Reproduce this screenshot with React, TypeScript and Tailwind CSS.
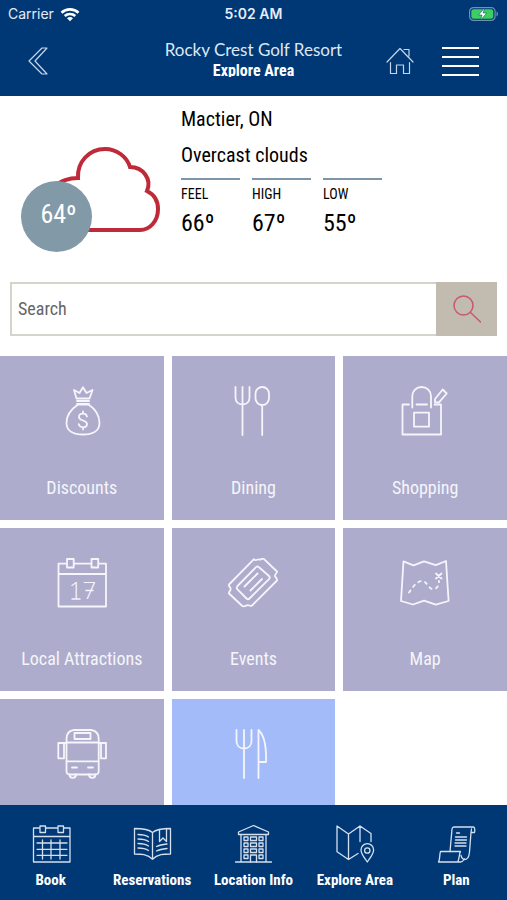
import type { ReactNode } from "react";

const narrow = "font-['Roboto_Condensed','Liberation_Sans_Narrow','Arial_Narrow',sans-serif]";

type IconProps = { children: ReactNode; className: string; box: string; stroke?: number };

function Icon({ children, className, box, stroke = 1.8 }: IconProps) {
  return (
    <svg
      aria-hidden="true"
      viewBox={box}
      className={className}
      fill="none"
      stroke="currentColor"
      strokeWidth={stroke}
      strokeLinejoin="round"
      strokeLinecap="round"
    >
      {children}
    </svg>
  );
}

type Tile = { name: string; label?: string; color: string; art: ReactNode };

const tiles: Tile[] = [
  {
    name: "Discounts",
    label: "Discounts",
    color: "bg-[#adaccc]",
    art: (
      <>
        <path d="M19.5 12.5 17 4l5.5 3L26 1.2 29.500 7l6-3-3 8.500zM20 15h12M20 18h12" />
        <path d="M21 18.500C15 22.500 9.500 29 9.500 37c0 8 7 11.500 16.500 11.500S42.500 45 42.500 37c0-8-5-14.500-11-18.500z" />
        <path d="M30 30.500c-.5-2-2-2.800-4-2.800-2.300 0-4 1.300-4 3.300 0 4.600 8 2.400 8 7 0 2-1.700 3.300-4 3.300-2.200 0-3.800-1-4.200-3.100M26 25.500v2.200M26 41.300v2.200" />
      </>
    ),
  },
  {
    name: "Dining",
    label: "Dining",
    color: "bg-[#adaccc]",
    art: (
      <>
        <path d="M7.500 1v10.500c0 4.500 3 7 7 7s7-2.500 7-7V1M14.500 1v48" />
        <rect x="27.500" y="1" width="13.500" height="18" rx="6.700" />
        <path d="M34.200 19v30" />
      </>
    ),
  },
  {
    name: "Shopping",
    label: "Shopping",
    color: "bg-[#adaccc]",
    art: (
      <>
        <path d="M9 18.500H2.500v30H41v-30h-6.500M16.500 18.500H27" />
        <path d="M12.300 21.500V10c0-5 4-9 9.300-9S31 5 31 10v11.500M14 26.700h15v14H14z" />
        <path d="m35 13 7.700-9.500 4 4L39 16.300h-4z" />
      </>
    ),
  },
  {
    name: "Local Attractions",
    label: "Local Attractions",
    color: "bg-[#adaccc]",
    art: (
      <>
        <path d="M9.500 5.700h-8v42.800h47.500V5.700h-7.500M17 5.700h17M1.500 16h47.500M10 1h6.700v8.500H10zM34.500 1h6.700v8.500h-6.700z" />
        <text
          x="25.500"
          y="41"
          textAnchor="middle"
          fill="currentColor"
          stroke="none"
          className="font-['Open_Sans',sans-serif] text-[24px] font-light"
        >
          17
        </text>
        <path d="M29 32.500h7M15 41h8" strokeWidth="1.500" />
      </>
    ),
  },
  {
    name: "Events",
    label: "Events",
    color: "bg-[#adaccc]",
    art: (
      <>
        <path d="M1 26.500 26 1.200c2 2.500 3.500-.5 5 .3 1.500 1 3-1.500 4.500-.8L49 13.500c.7 1.500-2.500 2.500-2 4.500.3 1.800 2.700 2.500 2 4.500L24 47.500c-2 1.300-3-1-5-.2-1.800.9-3 1.700-4.700.7L1 35.500c-.5-2 1.700-2.500 1.700-4.500S.3 28.500 1 26.500z" />
        <path d="M9.500 28 28 9.200q1.500-1.500 3 0L41 18q1.500 1.500 0 3.200L21.500 40.500q-1.500 1.500-3 0L9.500 31.300q-1.500-1.600 0-3.300z" />
        <path d="M16.500 28.500 29.500 15.500M22.500 32.500l11.500-11.500" />
      </>
    ),
  },
  {
    name: "Map",
    label: "Map",
    color: "bg-[#adaccc]",
    art: (
      <>
        <path d="m3.500 3.300 10 4L24 3.300l11.800 3.900L46 3l2.600 40-12.800 3.700-11.800-4-11 3.800L1 43z" />
        <path d="M9 34.500c4-6 8-11 13-11.500 5 0 6 8 11 8 4.500 0 6-4 6-8" strokeDasharray="2.500 4.500" />
        <path d="m36 15.500 5.500 5M41.500 15.500l-5.500 5" />
      </>
    ),
  },
  {
    name: "Bus",
    color: "bg-[#adaccc]",
    art: (
      <>
        <path d="M17 1h17q7.700 1 7.700 9v32q0 3.500-3.500 3.500H13q-3.500 0-3.500-3.500V10Q9.500 2 17 1zM9.500 13.500h32.200M9.500 32.300h32.200M17.500 4h16v6h-16z" />
        <path d="M9.500 14H1.300v15.300H7V14M41.700 14H49v15.300h-5V14M15 38.500h5M31 38.500h5M12.500 45.500c0 4.500 6.500 4.500 6.500 0M32 45.500c0 4.500 6.500 4.500 6.500 0" />
      </>
    ),
  },
  {
    name: "Fork and knife",
    color: "bg-[#a4bbfa]",
    art: (
      <>
        <path d="M8.500 1v11c0 4.500 3 7.500 7.500 7.500s7.500-3 7.500-7.500V1M16 1v48" />
        <path d="M30.500 49V1c5.500 5 8 17 7.500 32h-7.500" />
      </>
    ),
  },
];

const tabs = [
  {
    label: "Book",
    art: (
      <>
        <path d="M8.500 4H2.500v34h36.500V4h-6M14.500 4H27M2.500 12.500h36.500M9 2h5.500v6.500H9zM27 2h5.500v6.500H27z" />
        <path d="M6 19h30M6 25.300h30M6 31.300h30M11.500 16v19M20 16v19M29 16v19" />
      </>
    ),
  },
  {
    label: "Reservations",
    art: (
      <>
        <path d="M20.500 8.500C16 4.500 9 4.500 2.500 4.500V30c6.500 0 13 0 18 5.300 5-5.300 11.500-5.300 18-5.300V4.500c-6.500 0-13.500 0-18 4zM20.500 8.500v26.800" />
        <path d="M27.500 5.500v12L31 14l3.500 3.500v-13M6 10.500c4 0 8 .8 10.500 2.500M6 15c4 0 8 .8 10.500 2.500M6 19.500c4 0 8 .8 10.500 2.500M6 24c4 0 8 .8 10.500 2.500M24.500 22.500c3-1.500 6-2 10.500-2.500M24.500 27c3-1.500 6-2 10.500-2.500" />
      </>
    ),
  },
  {
    label: "Location Info",
    art: (
      <>
        <path d="M5.500 8 20.500 1.500 35.500 8v2.500h-30zM8 10.500V38M33 10.500V38M2.500 38h36" />
        <path d="M11 13h4v3.500h-4zM17.500 13h6v3.500h-6zM26 13h4v3.500h-4zM11 19h4v3.500h-4zM17.500 19h6v3.500h-6zM26 19h4v3.500h-4zM11 25h4v3.500h-4zM17.500 25h6v3.500h-6zM26 25h4v3.500h-4zM11 31h4v3.500h-4zM26 31h4v3.500h-4zM17.500 38v-7h6v7" />
      </>
    ),
  },
  {
    label: "Explore Area",
    art: (
      <>
        <path d="M13.500 35.500 2 27.800V2l11.500 8L25 2l11 7.500v8M13.500 10v25.500l9.500-6M25 2v15.500" />
        <path d="M32.300 38c-3-4.500-6.300-8-6.300-12a6.300 6.300 0 0 1 12.600 0c0 4-3.300 7.500-6.300 12z" />
        <circle cx="32.300" cy="26.500" r="2.700" />
      </>
    ),
  },
  {
    label: "Plan",
    art: (
      <>
        <path d="M14 27.500 16 5c.2-1.500.5-2 2-2h19.500c1.500 0 1.500 4.500 1 5.500H35L33.500 28c-.5 5-1.500 7.500-4.500 7.500-2.500 0-3.500-2-4-4M35 8.500l.5-3.500" />
        <path d="M4.500 27.500h20c-1.500 2-1 8.500-3 10.500H2.500c1.500-2 1-8 2-10.500zM21.500 38h3c2 0 3-1.500 4-3M20.500 9h3M19.500 13h11M19.500 16h11M19 19h11M19 22h11" />
      </>
    ),
  },
];

const readings = [
  { name: "FEEL", value: "66º" },
  { name: "HIGH", value: "67º" },
  { name: "LOW", value: "55º" },
];

function StatusBar() {
  return (
    <div className="grid h-7 grid-cols-3 items-center px-2 font-[Inter,sans-serif] text-sm text-[#e6ecf5]">
      <div className="flex items-center gap-1.5">
        <span>Carrier</span>
        <svg aria-hidden="true" viewBox="0 0 20 15" className="h-[15px] w-5" fill="none" stroke="#fff" strokeWidth="2.600">
          <path d="M1.500 5.700a12.500 12.500 0 0 1 17 0M4.700 9a8 8 0 0 1 10.600 0" />
          <path d="M7 11.300a4.500 4.500 0 0 1 6 0l-3 3z" fill="#fff" stroke="none" />
        </svg>
      </div>
      <span className="text-center font-semibold">5:02 AM</span>
      <svg aria-hidden="true" viewBox="0 0 30 14" className="h-3.5 w-[30px] justify-self-end">
        <rect x=".6" y=".6" width="25.500" height="12.800" rx="4" fill="none" stroke="#6f91b5" strokeWidth="1.200" />
        <rect x="2.300" y="2.300" width="22" height="9.400" rx="2.500" fill="#3bd05f" />
        <path d="M27.500 4.500v5c2-.7 2-4.300 0-5z" fill="#6f91b5" />
        <path d="m15.500 1-6 7h3.500l-1.300 5 6-7h-3.500z" fill="#fff" stroke="#00376f" strokeWidth=".5" />
      </svg>
    </div>
  );
}

export default function App() {
  return (
    <div className={`flex h-screen flex-col overflow-hidden bg-white text-black ${narrow}`}>
      <header className="h-24 shrink-0 bg-[#003876] text-white">
        <StatusBar />
        <div className="grid grid-cols-[1fr_auto_1fr] items-center px-7 pt-2.5">
          <button type="button" aria-label="Back" className="justify-self-start">
            <Icon box="0 0 20 28" className="h-7 w-5 text-[#c5d5ea]" stroke={1.2}>
              <path d="M14 1h5L7 14l12 13h-5L1 14z" />
            </Icon>
          </button>
          <div className="pb-[7px] text-center">
            <h1 className="h-[19px] overflow-hidden font-[Lato,sans-serif] text-[17px] leading-6 text-[#dfe7f2]">
              Rocky Crest Golf Resort
            </h1>
            <p className="mt-1 h-4 overflow-hidden text-base font-bold leading-5">Explore Area</p>
          </div>
          <div className="flex items-center gap-7 justify-self-end">
            <button type="button" aria-label="Home">
              <Icon box="0 0 28 28" className="size-7 text-[#c5d5ea]" stroke={1.2}>
                <path d="M1 15 14 1.500 27 15M4.500 15.500V26.500h6v-8.500h7v8.500h6v-11M18 2.500h5v6.500" />
              </Icon>
            </button>
            <button type="button" aria-label="Menu" className="flex w-[37px] flex-col gap-[7px]">
              <span className="h-0.5 bg-white" />
              <span className="h-0.5 bg-white" />
              <span className="h-0.5 bg-white" />
              <span className="h-0.5 bg-white" />
            </button>
          </div>
        </div>
      </header>

      <main className="min-h-0 flex-1 overflow-y-auto [scrollbar-width:none]">
        <section aria-label="Weather" className="flex gap-5 pl-5 pt-2">
          <div className="relative h-[150px] w-[141px] shrink-0">
            <svg aria-hidden="true" viewBox="0 0 141 150" className="size-full" fill="none" stroke="#bf2a38" strokeWidth="4">
              <path d="M36 82c4-5 13-8 22-8C57 58 69 45 85 45c12 0 22 8 25 18 13 0 22 12 17 24 8 4 11 10 11 18 0 12-8 21-18 21H56" />
            </svg>
            <div className="absolute bottom-0.5 left-px flex size-[71px] items-center justify-center rounded-full bg-[#8299a8] pb-1 text-[26px] text-white">
              <span className="pl-1">64º</span>
            </div>
          </div>
          <div>
            <h2 className="text-xl leading-[30px]">Mactier, ON</h2>
            <p className="pt-1.5 text-xl leading-[30px]">Overcast clouds</p>
            <dl className="flex gap-3 pt-2">
              {readings.map((r) => (
                <div key={r.name} className="w-[59px] border-t-2 border-[#7d95a8]">
                  <dt className="pt-1 text-sm leading-5">{r.name}</dt>
                  <dd className="pt-[3px] text-2xl leading-8">{r.value}</dd>
                </div>
              ))}
            </dl>
          </div>
        </section>

        <form className="mx-2.5 mb-5 mt-7 flex h-[54px]" onSubmit={(e) => e.preventDefault()}>
          <input
            type="search"
            aria-label="Search"
            placeholder="Search"
            className="min-w-0 flex-1 border-2 border-r-0 border-[#d6d3ca] px-1.5 text-lg outline-none placeholder:text-[#666]"
          />
          <button type="submit" aria-label="Submit search" className="flex w-[61px] items-center justify-center bg-[#c1bbb0]">
            <Icon box="0 0 28 28" className="size-7 text-[#c9596a]" stroke={1.5}>
              <circle cx="10.500" cy="10.500" r="9.500" />
              <path d="m17.500 17.500 10 9.500" />
            </Icon>
          </button>
        </form>

        <div className="grid grid-cols-3 gap-2">
          {tiles.map((t) => (
            <button
              key={t.name}
              type="button"
              aria-label={t.name}
              className={`flex aspect-square flex-col items-center justify-between pb-[18px] pt-[30px] text-[#f5f5fb] ${t.color}`}
            >
              <Icon box="0 0 50 50" className="size-[50px]">
                {t.art}
              </Icon>
              {t.label && <span className="text-lg leading-7">{t.label}</span>}
            </button>
          ))}
        </div>
      </main>

      <nav aria-label="Main" className="grid h-[95px] shrink-0 grid-cols-5 bg-[#003876] text-white">
        {tabs.map((t) => (
          <a key={t.label} href="#" className="flex flex-col items-center gap-1.5 pt-[19px]">
            <Icon box="0 0 40 40" className="size-10 text-[#d5e0ee]" stroke={1.3}>
              {t.art}
            </Icon>
            <span className="whitespace-nowrap text-[15px] font-bold leading-5">{t.label}</span>
          </a>
        ))}
      </nav>
    </div>
  );
}
